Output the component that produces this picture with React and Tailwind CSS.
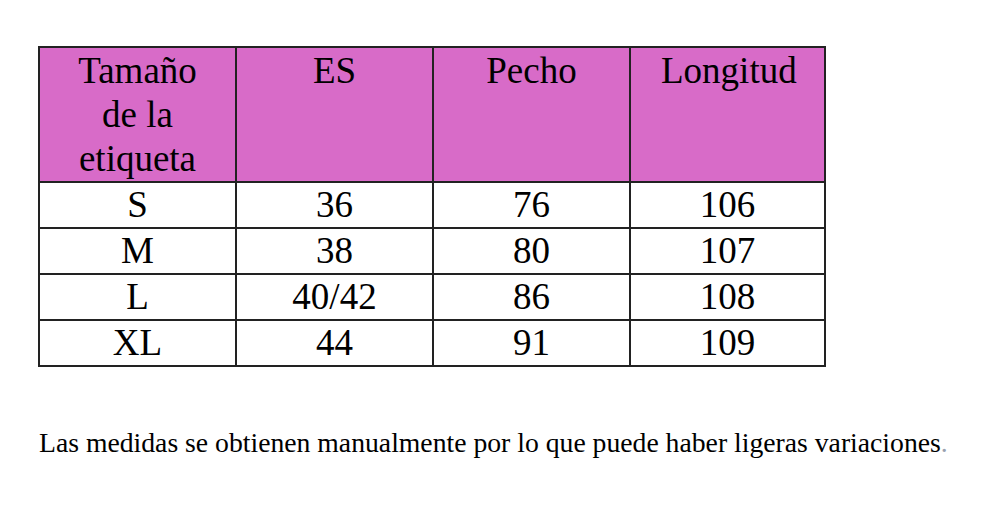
import React from "react";

const rows = [
  ["S", "36", "76", "106"],
  ["M", "38", "80", "107"],
  ["L", "40/42", "86", "108"],
  ["XL", "44", "91", "109"],
];

export default function App() {
  return (
    <div className="w-[990px] h-[514px] bg-white text-black overflow-hidden font-['Liberation_Serif',serif]">
      <div className="pt-[46px] pl-[38px]">
        <div className="grid grid-cols-[197px_197px_197px_195px] w-[788px] border-l-2 border-t-2 border-[#222]">
          {["Tamaño de la etiqueta", "ES", "Pecho", "Longitud"].map((h, i) => (
            <div
              key={i}
              className="h-[135px] bg-[#d86bc8] border-r-2 border-b-2 border-[#222] text-center text-[37px] leading-[44px] px-[30px] pt-px"
            >
              {i === 0 ? (
                <>
                  Tamaño
                  <br />
                  de la
                  <br />
                  etiqueta
                </>
              ) : (
                h
              )}
            </div>
          ))}
          {rows.map((r, ri) =>
            r.map((c, ci) => (
              <div
                key={ri + "-" + ci}
                className="h-[46px] border-r-2 border-b-2 border-[#222] text-center text-[37px] leading-[44px]"
              >
                {c}
              </div>
            ))
          )}
        </div>
      </div>
      <p className="mt-[60px] pl-[39px] text-[27.7px] leading-[32px] whitespace-nowrap">
        Las medidas se obtienen manualmente por lo que puede haber ligeras variaciones
        <span className="text-gray-400">.</span>
      </p>
    </div>
  );
}
